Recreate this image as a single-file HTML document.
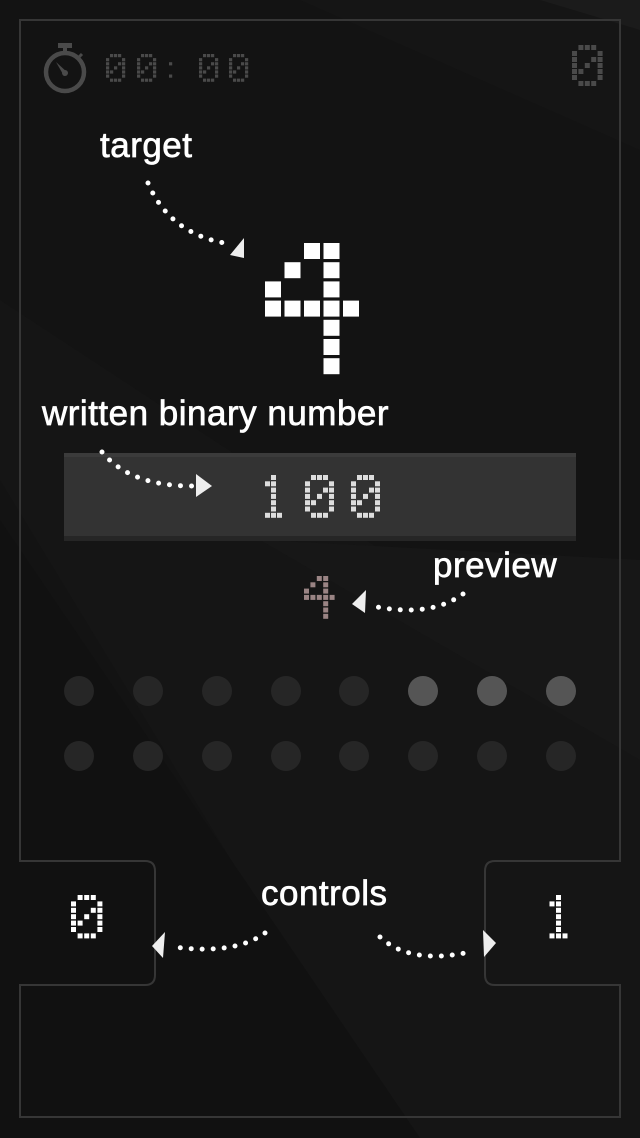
<!DOCTYPE html>
<html><head><meta charset="utf-8">
<style>
html,body{margin:0;padding:0;}
body{width:640px;height:1138px;background:#131313;position:relative;overflow:hidden;font-family:"Liberation Sans",Arial,sans-serif;}
.lbl{position:absolute;color:#fff;font-size:35px;line-height:35px;white-space:nowrap;letter-spacing:0.5px;-webkit-text-stroke:0.7px #fff;}
.hid{position:absolute;color:transparent;font-size:10px;}
</style></head>
<body>
<svg id="s" width="640" height="1138" style="position:absolute;left:0;top:0">
<polygon points="0,0 640,0 640,150 300,0" fill="#151515"/>
<polygon points="0,300 640,720 640,1138 400,1138 0,480" fill="#151515"/>
<polygon points="0,520 420,1138 0,1138" fill="#111"/>
<polygon points="260,540 640,560 640,760" fill="#171717"/>
<polygon points="540,0 640,0 640,30" fill="#1b1b1b"/>
<path d="M20,861 L20,20 L620,20 L620,861 L495,861 Q485,861 485,871 L485,975 Q485,985 495,985 L620,985 L620,1117 L20,1117 L20,985 L145,985 Q155,985 155,975 L155,871 Q155,861 145,861 Z" fill="none" stroke="#363636" stroke-width="2"/>
<rect x="64" y="453" width="512" height="88" fill="#333"/>
<rect x="64" y="453" width="512" height="4" fill="#3b3b3b"/>
<rect x="64" y="536" width="512" height="5" fill="#262626"/>
<g fill="none" stroke="#4a4a4a" stroke-width="4.5">
<circle cx="65" cy="72" r="19"/>
</g>
<rect x="58" y="43" width="14" height="5" fill="#4a4a4a"/>
<rect x="63" y="47" width="4" height="6" fill="#4a4a4a"/>
<line x1="79" y1="57" x2="82" y2="54" stroke="#4a4a4a" stroke-width="3"/>
<polygon points="56,62 68,73 64,76" fill="#4a4a4a"/><circle cx="65" cy="73" r="3" fill="#4a4a4a"/>
<g id="px"></g>
<g fill="none" stroke="#fff" stroke-width="5" stroke-linecap="round" stroke-dasharray="0 11">
<path d="M148,183 Q170,235 230,244"/>
<path d="M102,452 Q130,486 192,486"/>
<path d="M463,594 Q430,618 372,606"/>
<path d="M265,933 Q235,955 174,947"/>
<path d="M380,937 Q410,965 470,952"/>
</g>
<g fill="#eee">
<polygon points="230,255 244,238 244,258"/>
<polygon points="196,474 212,486 196,497"/>
<polygon points="352,604 366,590 365,613"/>
<polygon points="152,946 165,932 163,958"/>
<polygon points="496,943 483,930 484,957"/>
</g>
<g fill="#262626">
<circle cx="79" cy="691" r="15"/><circle cx="148" cy="691" r="15"/><circle cx="217" cy="691" r="15"/><circle cx="286" cy="691" r="15"/><circle cx="354" cy="691" r="15"/>
<circle cx="79" cy="756" r="15"/><circle cx="148" cy="756" r="15"/><circle cx="217" cy="756" r="15"/><circle cx="286" cy="756" r="15"/><circle cx="354" cy="756" r="15"/><circle cx="423" cy="756" r="15"/><circle cx="492" cy="756" r="15"/><circle cx="561" cy="756" r="15"/>
</g>
<g fill="#555"><circle cx="423" cy="691" r="15"/><circle cx="492" cy="691" r="15"/><circle cx="561" cy="691" r="15"/></g>
</svg>
<div class="lbl" style="left:100px;top:128px">target</div>
<div class="lbl" style="left:42px;top:396px">written binary number</div>
<div class="lbl" style="left:433px;top:548px">preview</div>
<div class="lbl" style="left:261px;top:876px">controls</div>
<span class="hid" style="left:107px;top:60px">00:00</span>
<span class="hid" style="left:575px;top:60px">0</span>
<span class="hid" style="left:290px;top:290px">4</span>
<span class="hid" style="left:300px;top:490px">100</span>
<span class="hid" style="left:310px;top:590px">4</span>
<span class="hid" style="left:80px;top:910px">0</span>
<span class="hid" style="left:550px;top:910px">1</span>
<script>
var G={
'0':[".###.","#...#","#..##","#.#.#","##..#","#...#",".###."],
'1':["..#..",".##..","..#..","..#..","..#..","..#..",".###."],
'4':["..##.",".#.#.","#..#.","#####","...#.","...#.","...#."],
':':[".....",".....","..#..",".....",".....","..#..","....."]
};
var out="";
function d(ch,x,y,px,py,c,col){var g=G[ch];for(var r=0;r<7;r++)for(var k=0;k<5;k++)if(g[r][k]=='#')out+='<rect x="'+(x+k*px).toFixed(1)+'" y="'+(y+r*py).toFixed(1)+'" width="'+c+'" height="'+c+'" fill="'+col+'"/>';}
var tc="#4a4a4a";
d('0',106,54,4,4.1,3.2,tc);d('0',137,54,4,4.1,3.2,tc);d(':',161,54,4,4.1,3.2,tc);d('0',199,54,4,4.1,3.2,tc);d('0',229,54,4,4.1,3.2,tc);
d('0',572,45,6.4,6,5,tc);
d('4',265,243,19.5,19.2,16,"#fff");
d('1',259,475,6,6.3,5,"#ddd");d('0',305,475,6,6.3,5,"#ddd");d('0',351,475,6,6.3,5,"#ddd");
d('4',304,576,6.4,6.3,5,"#9a8484");
d('0',71,895,6.6,6.4,5,"#fff");
d('1',543,895,6.5,6.4,5,"#fff");
document.getElementById('px').innerHTML=out;
</script>
</body></html>
